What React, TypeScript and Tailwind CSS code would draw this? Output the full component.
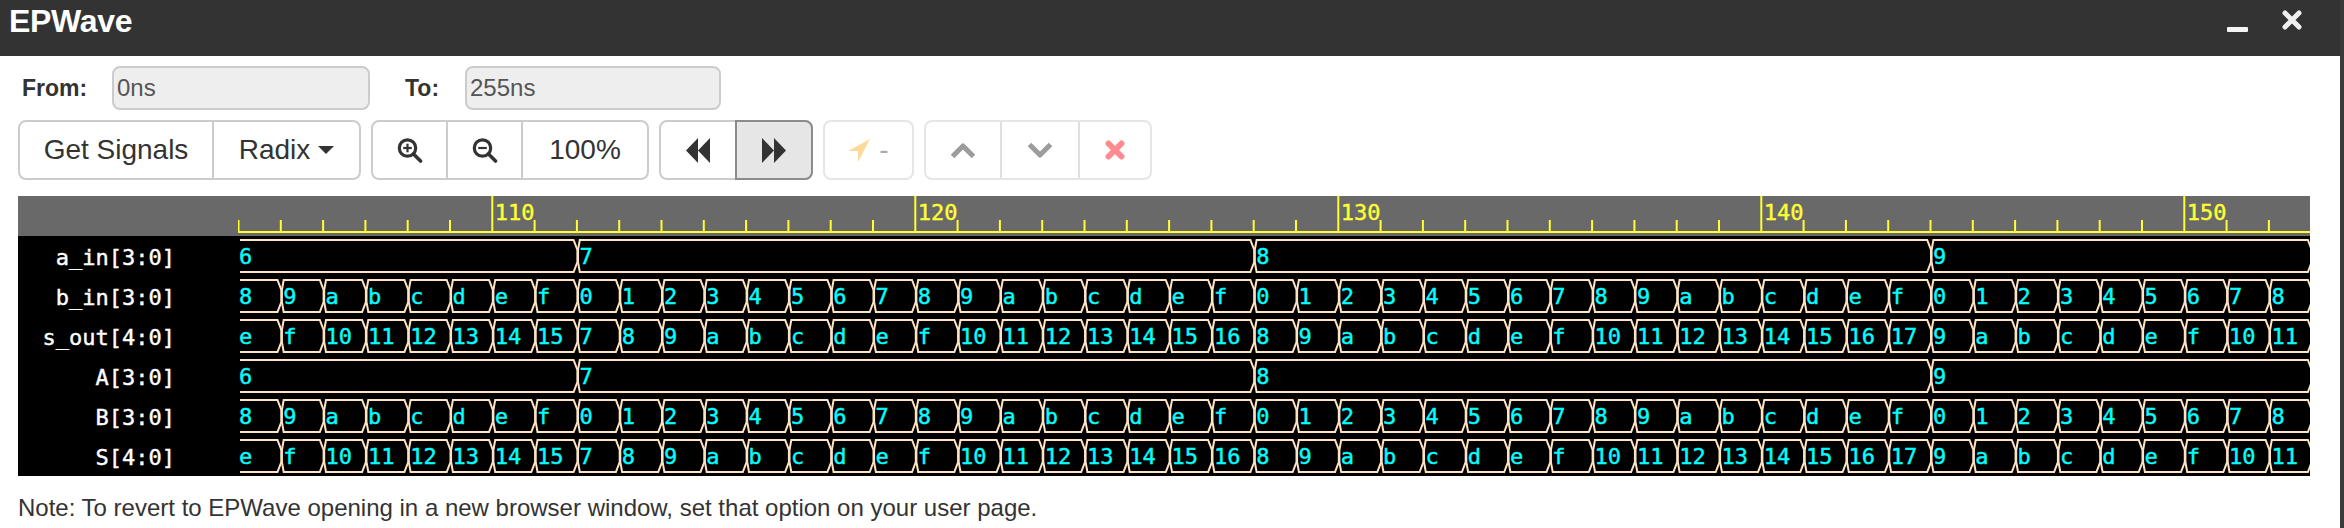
const UNIT = 42.3;
const toX = (t: number) => (t - 104) * UNIT;

const aIn = (t: number) => (t < 112 ? 6 : t < 128 ? 7 : t < 144 ? 8 : 9);
const bIn = (t: number) => t % 16;
const sOut = (t: number) => aIn(t) + bIn(t);

const signals = [
  { name: 'a_in[3:0]', fn: aIn },
  { name: 'b_in[3:0]', fn: bIn },
  { name: 's_out[4:0]', fn: sOut },
  { name: 'A[3:0]', fn: aIn },
  { name: 'B[3:0]', fn: bIn },
  { name: 'S[4:0]', fn: sOut },
];

const segments = (fn: (t: number) => number) => {
  const segs: { start: number; end: number; value: number }[] = [];
  for (let t = 104; t < 153; t++) {
    const last = segs[segs.length - 1];
    if (last && last.value === fn(t)) last.end = t + 1;
    else segs.push({ start: t, end: t + 1, value: fn(t) });
  }
  return segs;
};

const cellPath = (start: number, end: number, top: number) => {
  const bottom = top + 32;
  const r = toX(end) + 1;
  const l = toX(start) + 1;
  if (start === 104) {
    return `M2 ${top} H${r - 3.8} L${r} ${top + 10} V${bottom - 10} L${r - 3.8} ${bottom} H2`;
  }
  return `M${l + 2.4} ${top} H${r - 3.8} L${r} ${top + 10} V${bottom - 10} L${r - 3.8} ${bottom} H${l + 2.4} L${l + 0.6} ${bottom - 10} V${top + 10} Z`;
};

const ticks = Array.from({ length: 50 }, (_, i) => 104 + i);

const Waves = () => (
  <svg width="2072" height="280" className="block bg-black">
    <rect width="2072" height="40" fill="#696969" />
    <line x1="0" y1="36" x2="2072" y2="36" stroke="#ffff33" strokeWidth="2" />
    {ticks.map((t) => (
      <g key={t}>
        <line
          x1={toX(t) + 0.5}
          x2={toX(t) + 0.5}
          y1={t % 10 === 0 ? 0 : 24}
          y2="36"
          stroke="#ffff33"
          strokeWidth="2"
        />
        {t % 10 === 0 && (
          <text
            x={toX(t) + 3}
            y="24"
            className="fill-[#ffff33] stroke-[#ffff33] stroke-[0.4px] font-['DejaVu_Sans_Mono'] text-[22px]"
          >
            {t}
          </text>
        )}
      </g>
    ))}
    {signals.map((s, i) => (
      <g key={s.name}>
        {segments(s.fn).map((seg) => (
          <g key={seg.start}>
            <path d={cellPath(seg.start, seg.end, 44 + 40 * i)} fill="none" stroke="#ffe4c4" strokeWidth="2" />
            <text
              x={seg.start === 104 ? 1 : toX(seg.start) + 3}
              y={68 + 40 * i}
              className="fill-[#00ffff] stroke-[#00ffff] stroke-[0.4px] font-['DejaVu_Sans_Mono'] text-[22px]"
            >
              {seg.value.toString(16)}
            </text>
          </g>
        ))}
      </g>
    ))}
  </svg>
);

const ZoomIcon = ({ plus }: { plus?: boolean }) => (
  <svg width="26" height="25" viewBox="0 0 26 25" fill="none" stroke="#333">
    <circle cx="10.5" cy="10" r="8.2" strokeWidth="3.2" />
    <line x1="16.5" y1="16" x2="23.5" y2="23" strokeWidth="3.6" strokeLinecap="round" />
    <line x1="6.2" y1="10" x2="14.8" y2="10" strokeWidth="2.2" />
    {plus && <line x1="10.5" y1="5.7" x2="10.5" y2="14.3" strokeWidth="2.2" />}
  </svg>
);

const Skip = ({ back }: { back?: boolean }) => (
  <svg width="24" height="25" viewBox="0 0 24 25" fill="#333">
    {back ? <path d="M0 12.5 12 0V25ZM12 12.5 24 0V25Z" /> : <path d="M0 0 12 12.5 0 25ZM12 0 24 12.5 12 25Z" />}
  </svg>
);

const Group = ({ children, faded }: { children: React.ReactNode; faded?: boolean }) => (
  <div className={`flex h-[60px] rounded-lg border-2 ${faded ? 'border-[#e6e6e6]' : 'border-[#cccccc]'}`}>{children}</div>
);

const Cell = ({ className, children }: { className: string; children?: React.ReactNode }) => (
  <div className={`flex h-full shrink-0 items-center justify-center ${className}`}>{children}</div>
);

export default function App() {
  return (
    <div className="flex h-[528px] w-[2344px] overflow-hidden bg-white font-['Liberation_Sans',Arial,sans-serif] text-[#333333]">
      <div className="w-[2340px]">
        <div className="flex h-14 items-start justify-between bg-[#333333] pl-[9px] pr-[38px]">
          <span className="text-[32px] font-bold leading-[42px] tracking-[-0.3px] text-white">EPWave</span>
          <div className="flex gap-[34px]">
            <svg width="21" height="5" className="mt-[27px]">
              <rect width="21" height="5" rx="1" fill="#f4f4f4" />
            </svg>
            <svg width="20" height="20" className="mt-[10px]" stroke="#f0f0f0" strokeWidth="5">
              <path d="M3 3 17 17M17 3 3 17" strokeLinecap="round" />
            </svg>
          </div>
        </div>

        <div className="pl-[18px]">
          <div className="mt-[10px] flex h-[44px] items-center">
            <span className="ml-1 w-[90px] text-[23px] font-bold">From:</span>
            <div className="flex h-full w-[258px] items-center rounded-lg border-2 border-[#cccccc] bg-[#eeeeee] pl-[3px] text-[24px] text-[#555555]">
              0ns
            </div>
            <span className="ml-[35px] w-[60px] text-[23px] font-bold">To:</span>
            <div className="flex h-full w-[256px] items-center rounded-lg border-2 border-[#cccccc] bg-[#eeeeee] pl-[3px] text-[24px] text-[#555555]">
              255ns
            </div>
          </div>

          <div className="mt-[10px] flex gap-[10px] text-[28px]">
            <Group>
              <Cell className="w-[194px] border-r-2 border-[#cccccc]">Get Signals</Cell>
              <Cell className="w-[145px] gap-[8px]">
                Radix
                <svg width="16" height="8" fill="#333">
                  <path d="M0 0H16L8 8Z" />
                </svg>
              </Cell>
            </Group>
            <Group>
              <Cell className="w-[75px] border-r-2 border-[#cccccc]">
                <ZoomIcon plus />
              </Cell>
              <Cell className="w-[75px] border-r-2 border-[#cccccc]">
                <ZoomIcon />
              </Cell>
              <Cell className="w-[124px]">100%</Cell>
            </Group>
            <Group>
              <Cell className="w-[74px]">
                <Skip back />
              </Cell>
              <div className="-my-[2px] -mr-[2px] flex w-[78px] items-center justify-center rounded-r-lg border-2 border-[#8c8c8c] bg-[#e6e6e6]">
                <Skip />
              </div>
            </Group>
            <Group faded>
              <Cell className="w-[87px] gap-[9px]">
                <svg width="22" height="23" fill="#ffd89c">
                  <path d="M22 0 0 12H10V23Z" />
                </svg>
                <span className="text-[#aaaaaa]">-</span>
              </Cell>
            </Group>
            <Group faded>
              <Cell className="w-[76px] border-r-2 border-[#e0e0e0]">
                <svg width="26" height="17" fill="none" stroke="#9c9c9c" strokeWidth="5" strokeLinejoin="round">
                  <path d="M2.5 14.5 13 4 23.5 14.5" />
                </svg>
              </Cell>
              <Cell className="w-[78px] border-r-2 border-[#e0e0e0]">
                <svg width="26" height="17" fill="none" stroke="#9c9c9c" strokeWidth="5" strokeLinejoin="round">
                  <path d="M2.5 2.5 13 13 23.5 2.5" />
                </svg>
              </Cell>
              <Cell className="w-[70px]">
                <svg width="20" height="20" fill="none" stroke="#ff8a8f" strokeWidth="6" strokeLinecap="round">
                  <path d="M3.5 3.5 16.5 16.5M16.5 3.5 3.5 16.5" />
                </svg>
              </Cell>
            </Group>
          </div>

          <div className="mt-4 flex h-[280px] w-[2292px] bg-black">
            <div className="w-[220px] shrink-0">
              <div className="h-10 bg-[#696969]" />
              <div className="flex flex-col gap-[6px] pr-[63px] pt-[5px] text-right font-['DejaVu_Sans_Mono'] text-[22px] leading-[34px] text-white [-webkit-text-stroke:0.4px_white]">
                {signals.map((s) => (
                  <div key={s.name}>{s.name}</div>
                ))}
              </div>
            </div>
            <Waves />
          </div>

          <p className="mt-[19px] text-[24px] leading-[26px]">
            Note: To revert to EPWave opening in a new browser window, set that option on your user page.
          </p>
        </div>
      </div>
      <div className="w-1 bg-[#3a3a3a]" />
    </div>
  );
}
